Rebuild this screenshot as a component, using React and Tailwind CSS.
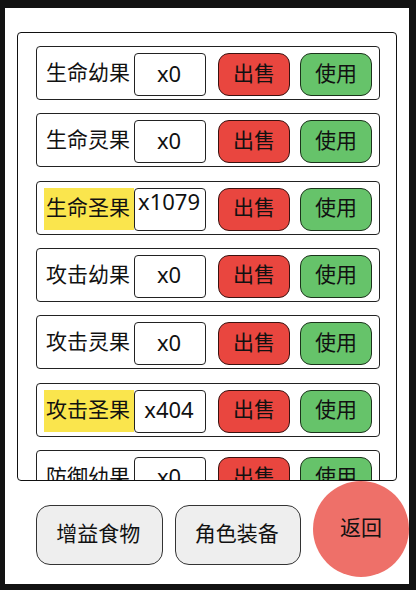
import React from "react";

const items = [
  { name: "生命幼果", count: 0 },
  { name: "生命灵果", count: 0 },
  { name: "生命圣果", count: 1079, top: true },
  { name: "攻击幼果", count: 0 },
  { name: "攻击灵果", count: 0 },
  { name: "攻击圣果", count: 404 },
  { name: "防御幼果", count: 0 },
];

function ItemRow({ name, count, top }) {
  return (
    <li className="flex h-[54px] shrink-0 items-start rounded-[4px] border border-[#222] pt-[6px] pr-[7px] pl-[7px]">
      <span
        className={
          "flex h-[42px] flex-1 items-center justify-center pr-[2px] pb-1 whitespace-nowrap " +
          (count > 0 ? "bg-[#fae54d]" : "")
        }
      >
        {name}
      </span>
      <span
        className={
          "flex h-[43px] w-[72px] justify-center rounded-[4px] border border-[#222] pr-[2px] text-[22px] " +
          (top ? "items-start leading-6" : "items-center pb-1")
        }
      >
        x{count}
      </span>
      <button
        type="button"
        className="ml-3 h-[43px] w-[72px] rounded-[11px] border border-[#3a1210] bg-[#e9463f] pb-1"
      >
        出售
      </button>
      <button
        type="button"
        className="ml-[10px] h-[43px] w-[72px] rounded-[11px] border border-[#1b331b] bg-[#66c36a] pb-1"
      >
        使用
      </button>
    </li>
  );
}

function NavButton({ children }) {
  return (
    <button
      type="button"
      className="mt-6 h-[60px] flex-1 rounded-[14px] border border-[#333] bg-[#eeeeee] pr-[2px] pb-1 whitespace-nowrap"
    >
      {children}
    </button>
  );
}

export default function App() {
  return (
    <div className="h-screen bg-[#121212] pt-2 pr-[7px] pb-[6px] pl-[5px] font-['Noto_Sans','Noto_Sans_CJK_SC',sans-serif] text-[21px] leading-[30px] text-[#111]">
      <main className="flex h-full flex-col bg-white pt-6 pb-[7px] pl-3">
        <section className="mr-3 min-h-0 flex-1 overflow-hidden rounded-[4px] border border-[#111] pt-[13px] pr-4 pl-[18px]">
          <ul className="flex h-[458px] flex-col justify-between">
            {items.map((item) => (
              <ItemRow key={item.name} {...item} />
            ))}
          </ul>
        </section>
        <nav className="flex items-start gap-3 pl-[19px]">
          <NavButton>增益食物</NavButton>
          <NavButton>角色装备</NavButton>
          <button
            type="button"
            className="size-24 shrink-0 rounded-full bg-[#ee7069] pb-1"
          >
            返回
          </button>
        </nav>
      </main>
    </div>
  );
}
